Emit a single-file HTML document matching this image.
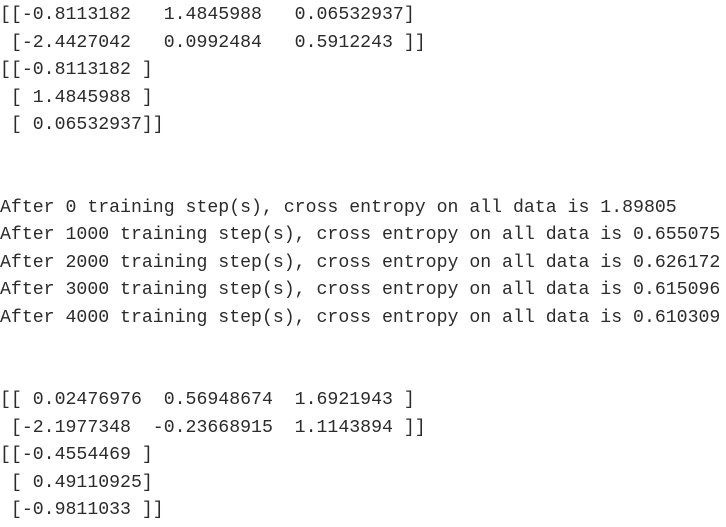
<!DOCTYPE html>
<html><head><style>
html,body{margin:0;padding:0;background:#fff;width:726px;height:527px;overflow:hidden}
pre{margin:0;padding:2px 0 0 0;font-family:"Liberation Mono",monospace;font-size:18.2px;line-height:27.5px;color:#2b2b2b;white-space:pre}
</style></head><body><pre>[[-0.8113182   1.4845988   0.06532937]
 [-2.4427042   0.0992484   0.5912243 ]]
[[-0.8113182 ]
 [ 1.4845988 ]
 [ 0.06532937]]


After 0 training step(s), cross entropy on all data is 1.89805
After 1000 training step(s), cross entropy on all data is 0.655075
After 2000 training step(s), cross entropy on all data is 0.626172
After 3000 training step(s), cross entropy on all data is 0.615096
After 4000 training step(s), cross entropy on all data is 0.610309


[[ 0.02476976  0.56948674  1.6921943 ]
 [-2.1977348  -0.23668915  1.1143894 ]]
[[-0.4554469 ]
 [ 0.49110925]
 [-0.9811033 ]]</pre></body></html>
